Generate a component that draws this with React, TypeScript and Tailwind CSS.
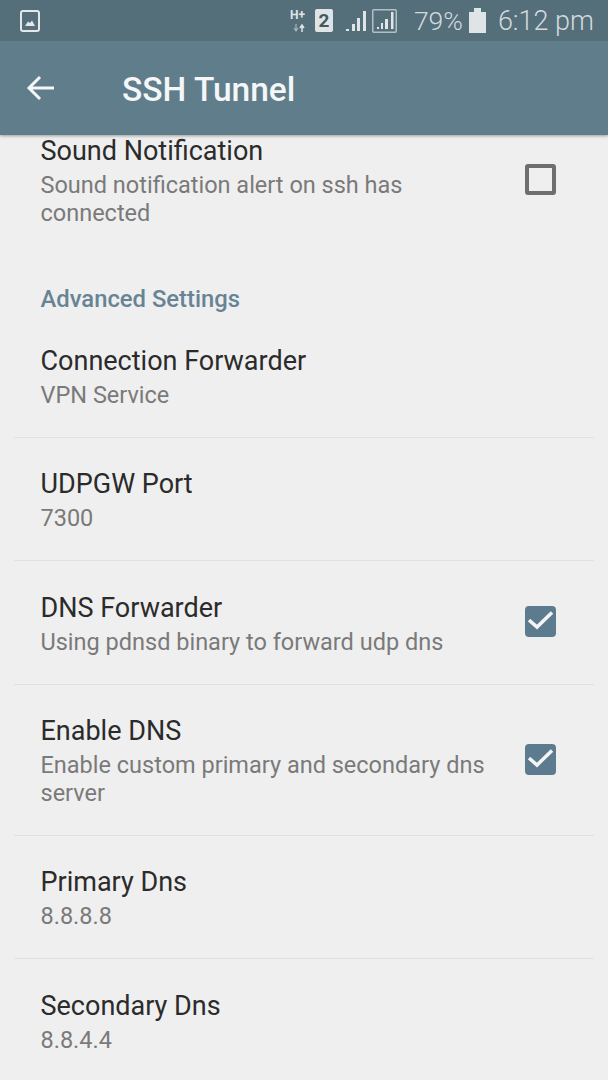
const roboto = { fontFamily: "Roboto, sans-serif" };

function Checkbox({ checked }: { checked: boolean }) {
  if (checked) {
    return (
      <div className="w-[31px] h-[31px] mb-[3px] rounded-[4px] bg-[#5d7b8e] flex items-center justify-center shrink-0">
        <svg width="25" height="25" viewBox="0 0 25 25" fill="none" stroke="#f5f5f5" strokeWidth="3.500">
          <path d="M1 11 L9 18 L24 3.500" />
        </svg>
      </div>
    );
  }
  return <div className="w-[31px] h-[31px] mb-[3px] rounded-[3px] border-[4px] border-[#6e6e6e] shrink-0" />;
}

function Row({ title, sub, checked, last }: { title: string; sub: string; checked?: boolean; last?: boolean }) {
  return (
    <div className={"mx-[14px] pl-[26.500px] pr-[38px] pt-[29.500px] pb-[27.830px] flex items-center justify-between " + (last ? "" : "border-b border-[#e0e0e0]")}>
      <div className="w-[460px]">
        <div className="text-[27px] leading-[34px] text-[#2b2b2b]">{title}</div>
        <div className="text-[23.500px] leading-[28px] mt-[3px] text-[#7a7a7a]">{sub}</div>
      </div>
      {checked !== undefined && <Checkbox checked={checked} />}
    </div>
  );
}

function StatusBar() {
  return (
    <div className="h-[41px] bg-[#546e7a] flex items-center pl-[20px] pr-[14px] text-[#d3dadd]">
      <svg width="20" height="22" viewBox="0 0 20 22" fill="none">
        <rect x="1" y="1" width="18" height="20" rx="2" stroke="#e4e8ea" strokeWidth="2" />
        <path d="M5 16 L8 11.500 L10 13 L12 10.500 L15 16 Z" fill="#e4e8ea" />
      </svg>
      <div className="ml-auto flex items-center">
        <svg width="17" height="24" viewBox="0 0 17 24" fill="#dfe4e6">
          <text x="0" y="10" fontSize="12" fontWeight="700" fontFamily="Roboto, sans-serif">H+</text>
          <path d="M6 15v6M4 19l2 3 2-3" stroke="#aab5ba" strokeWidth="1.200" fill="none" />
          <path d="M12 23v-6M10 19l2-3 2 3" stroke="#dfe4e6" strokeWidth="1.500" fill="none" />
        </svg>
        <div className="ml-[8px] w-[18px] h-[23px] bg-[#dfe4e6] rounded-[2px] text-[#43585f] text-[19px] leading-[23px] font-bold text-center">2</div>
        <svg className="ml-[13px]" width="21" height="22" viewBox="0 0 21 22" fill="#dfe4e6">
          <path d="M0 19h3v2H0zM6 14h3v7H6zM11 8h3v13h-3zM17 1h3v20h-3z" />
        </svg>
        <svg className="ml-[5px]" width="25" height="24" viewBox="0 0 25 24" fill="#dfe4e6">
          <rect x="0.750" y="0.750" width="23.500" height="22.500" rx="1" fill="none" stroke="#b4bfc4" strokeWidth="1.500" />
          <path d="M5 18h2v2H5zM9 14h2v6H9zM13 10h3v10h-3zM19 3h2.500v17H19z" />
        </svg>
        <span className="ml-[17px] text-[26.500px] leading-[30px] font-light">79%</span>
        <svg className="ml-[6px]" width="17" height="25" viewBox="0 0 17 25" fill="#dfe4e6">
          <path d="M0 4h5V0h7v4h5v21H0z" />
        </svg>
        <span className="ml-[12px] text-[27px] leading-[30px] font-light">6:12 pm</span>
      </div>
    </div>
  );
}

export default function App() {
  return (
    <div className="w-[608px] h-[1080px] overflow-hidden bg-[#efefef] flex flex-col" style={roboto}>
      <div className="relative z-10 shadow-[0_1px_3px_rgba(0,0,0,0.35)]">
        <StatusBar />
        <div className="h-[94px] bg-[#607d8b] flex items-center text-[#f4f6f7]">
          <svg className="ml-[26px]" width="29" height="26" viewBox="0 0 29 26" fill="none" stroke="currentColor" strokeWidth="3">
            <path d="M28 13H3M14 2 3 13l11 11" />
          </svg>
          <span className="ml-[67px] mt-[3px] text-[33.500px] leading-[40px] font-medium">SSH Tunnel</span>
        </div>
      </div>

      <div className="-mt-[1px]">
        <div className="pl-[40.500px] pr-[52px] flex items-center justify-between">
          <div className="w-[400px]">
            <div className="text-[27px] leading-[34px] text-[#2b2b2b]">Sound Notification</div>
            <div className="text-[23.500px] leading-[28px] mt-[3px] text-[#7a7a7a]">Sound notification alert on ssh has connected</div>
          </div>
          <Checkbox checked={false} />
        </div>

        <div className="pl-[40.500px] mt-[58px] text-[23.800px] leading-[28px] font-medium text-[#678494]">Advanced Settings</div>

        <div className="mt-[1.670px]">
          <Row title="Connection Forwarder" sub="VPN Service" />
          <Row title="UDPGW Port" sub="7300" />
          <Row title="DNS Forwarder" sub="Using pdnsd binary to forward udp dns" checked />
          <Row title="Enable DNS" sub="Enable custom primary and secondary dns server" checked />
          <Row title="Primary Dns" sub="8.8.8.8" />
          <Row title="Secondary Dns" sub="8.8.4.4" last />
        </div>
      </div>
    </div>
  );
}
